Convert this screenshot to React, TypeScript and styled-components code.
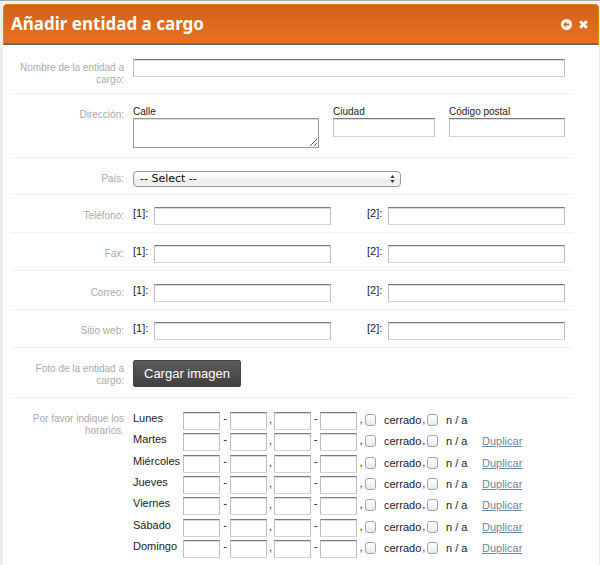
import React from "react";
import styled, { createGlobalStyle, css } from "styled-components";

const GlobalStyle = createGlobalStyle`
  * { box-sizing: border-box; }
  body {
    margin: 0;
    background: #fff;
    color: #222;
    font-family: "Liberation Sans", Arial, sans-serif;
    font-size: 11px;
  }
`;

const Frame = styled.div`
  min-height: 100vh;
  border: solid #eee;
  border-width: 0 1px 0 3px;
`;

const TopEdge = styled.div`
  height: 4px;
  margin: 0 -1px 0 -3px;
  background: #f2f2f2;
  border-top: 1px solid #a8a8a8;
`;

const Header = styled.header`
  display: flex;
  align-items: center;
  justify-content: space-between;
  height: 41px;
  padding: 0 10px 0 7px;
  border: 1px solid #e08212;
  border-bottom: 2px solid #706862;
  border-radius: 4px 4px 0 0;
  background: linear-gradient(#d0621b, #ea7020);
`;

const Title = styled.h1`
  margin: 0;
  color: #fff;
  font: 700 17px/24px "Noto Sans", "Open Sans", sans-serif;
`;

const HeaderActions = styled.div`
  display: flex;
  align-items: center;
  gap: 7px;
`;

const IconButton = styled.button`
  display: flex;
  padding: 0;
  border: 0;
  background: none;
  cursor: pointer;
`;

const Form = styled.form`
  margin: 0 27px 0 9px;
`;

const Row = styled.section<{ $height: number; $top: number; $last?: boolean }>`
  display: grid;
  grid-template-columns: 112px minmax(0, 1fr);
  align-items: start;
  column-gap: 9px;
  min-height: ${(p) => p.$height}px;
  padding: ${(p) => p.$top}px 7px 0 0;
  border-bottom: ${(p) => (p.$last ? "0" : "1px solid #efefef")};
`;

const RowLabel = styled.label<{ $drop?: number }>`
  padding-top: ${(p) => p.$drop ?? 3}px;
  color: #aaa;
  font-size: 10px;
  line-height: 12px;
  text-align: right;
`;

const inset = css`
  width: 100%;
  min-width: 0;
  margin: 0;
  padding: 0 3px;
  border: 1px solid #bdbdbd;
  border-top-color: #7c7c7c;
  border-bottom-color: #d4d4d4;
  border-radius: 0;
  background: #fff;
  box-shadow: inset 0 1px 0 #dcdcdc;
  font: inherit;
  outline: 0;
`;

const TextInput = styled.input`
  ${inset}
  display: block;
  height: 18px;
`;

const Address = styled.div`
  display: grid;
  grid-template-columns: 186fr 102fr 116fr;
  column-gap: 14px;
  align-items: start;
`;

const AddressField = styled.label`
  display: block;
  font-size: 10px;
  line-height: 12px;
`;

const AddressInput = styled(TextInput)`
  height: 19px;
`;

const StreetArea = styled.textarea`
  ${inset}
  display: block;
  height: 30px;
  border-color: #999;
  resize: both;
`;

const SelectBox = styled.div`
  position: relative;
  width: 62%;
`;

const CountrySelect = styled.select`
  display: block;
  width: 100%;
  height: 16px;
  padding: 0 6px;
  border: 1px solid #989898;
  border-radius: 4px;
  appearance: none;
  background: linear-gradient(#fff 0%, #f6f6f6 48%, #ebebeb 52%, #f3f3f3 100%);
  color: #111;
  font: 11px/14px "DejaVu Sans", sans-serif;
`;

const SelectArrows = styled.svg`
  position: absolute;
  top: 4px;
  right: 6px;
  pointer-events: none;
`;

const Pair = styled.div`
  display: grid;
  grid-template-columns: 1fr 1fr;
  column-gap: 36px;
`;

const Numbered = styled.label`
  display: grid;
  grid-template-columns: 21px minmax(0, 1fr);
  line-height: 12px;
`;

const UploadButton = styled.button`
  justify-self: start;
  height: 27px;
  padding: 0 10px;
  border: 1px solid #444;
  border-radius: 2px;
  background: linear-gradient(#5c5c5c, #404040);
  color: #fff;
  font: 13px/24px "Liberation Sans", Arial, sans-serif;
`;

const Schedule = styled.div`
  display: flex;
  flex-direction: column;
  justify-content: space-between;
  min-height: 146px;
`;

const DayRow = styled.div`
  display: grid;
  grid-template-columns: 50px 37px 10px 37px 7px 37px 9px 37px 8px 62px 55px auto;
  justify-content: start;
  align-items: start;
  height: 18px;
  line-height: 12px;
`;

const Day = styled.span``;

const Dash = styled.span`
  text-align: center;
`;

const Comma = styled.span`
  line-height: 14px;
  text-align: center;
`;

const CheckLabel = styled.label`
  display: grid;
  grid-template-columns: 11px 8px auto 1fr;
  align-items: start;
  line-height: 16px;
`;

const CheckText = styled.span`
  display: flex;
  gap: 1px;
  grid-column: 3;
  white-space: nowrap;
`;

const Check = styled.input`
  width: 11px;
  height: 12px;
  margin: 2px 0 0;
  border: 1px solid #a4a4a4;
  border-radius: 3px;
  appearance: none;
  background: linear-gradient(#fff, #e9e9e9);
  &:checked { background: #7b93ab; }
`;

const Duplicate = styled.a`
  color: #6c87a3;
  line-height: 16px;
  text-decoration: underline;
`;

const contacts = [
  { id: "telefono", label: "Teléfono:", height: 38, top: 12 },
  { id: "fax", label: "Fax:", height: 38, top: 12 },
  { id: "correo", label: "Correo:", height: 39, top: 13 },
  { id: "web", label: "Sitio web:", height: 38, top: 12 },
];

const days = ["Lunes", "Martes", "Miércoles", "Jueves", "Viernes", "Sábado", "Domingo"];

function TimeInput({ day, name }: { day: string; name: string }) {
  return <TextInput aria-label={`${day}, ${name}`} />;
}

function ScheduleRow({ day, copyable }: { day: string; copyable: boolean }) {
  return (
    <DayRow>
      <Day>{day}</Day>
      <TimeInput day={day} name="apertura 1" />
      <Dash>-</Dash>
      <TimeInput day={day} name="cierre 1" />
      <Comma>,</Comma>
      <TimeInput day={day} name="apertura 2" />
      <Dash>-</Dash>
      <TimeInput day={day} name="cierre 2" />
      <Comma>,</Comma>
      <CheckLabel>
        <Check type="checkbox" />
        <CheckText>
          <span>cerrado</span>
          <Comma>,</Comma>
        </CheckText>
      </CheckLabel>
      <CheckLabel>
        <Check type="checkbox" />
        <CheckText>n / a</CheckText>
      </CheckLabel>
      {copyable && <Duplicate href="#duplicar">Duplicar</Duplicate>}
    </DayRow>
  );
}

export default function App() {
  return (
    <>
      <GlobalStyle />
      <Frame>
        <TopEdge />
        <Header>
          <Title>Añadir entidad a cargo</Title>
          <HeaderActions>
            <IconButton type="button" aria-label="Volver">
              <svg width="11" height="11" viewBox="0 0 11 11">
                <circle cx="5.5" cy="5.5" r="5.5" fill="#fff" />
                <path d="M2 5.5 5.3 2.5V4.6H8.5V6.4H5.3V8.5Z" fill="#dc691d" />
              </svg>
            </IconButton>
            <IconButton type="button" aria-label="Cerrar">
              <svg width="9" height="9" viewBox="0 0 9 9">
                <path d="M1.2 1.2 7.8 7.8M7.8 1.2 1.2 7.8" stroke="#fff" strokeWidth="2.9" />
              </svg>
            </IconButton>
          </HeaderActions>
        </Header>
        <Form>
          <Row $height={49} $top={14}>
            <RowLabel htmlFor="nombre">Nombre de la entidad a cargo:</RowLabel>
            <TextInput id="nombre" />
          </Row>
          <Row $height={64} $top={12}>
            <RowLabel as="div" $drop={3}>Dirección:</RowLabel>
            <Address>
              <AddressField>
                Calle
                <StreetArea />
              </AddressField>
              <AddressField>
                Ciudad
                <AddressInput />
              </AddressField>
              <AddressField>
                Código postal
                <AddressInput />
              </AddressField>
            </Address>
          </Row>
          <Row $height={37} $top={13}>
            <RowLabel htmlFor="pais" $drop={2}>País:</RowLabel>
            <SelectBox>
              <CountrySelect id="pais">
                <option>-- Select --</option>
              </CountrySelect>
              <SelectArrows width="5" height="8" viewBox="0 0 5 8">
                <path d="M2.5 0 4.6 3H.4ZM2.5 8 .4 5H4.6Z" fill="#333" />
              </SelectArrows>
            </SelectBox>
          </Row>
          {contacts.map((c) => (
            <Row key={c.id} $height={c.height} $top={c.top}>
              <RowLabel as="div">{c.label}</RowLabel>
              <Pair>
                <Numbered>
                  [1]:
                  <TextInput name={`${c.id}1`} />
                </Numbered>
                <Numbered>
                  [2]:
                  <TextInput name={`${c.id}2`} />
                </Numbered>
              </Pair>
            </Row>
          ))}
          <Row $height={50} $top={12}>
            <RowLabel htmlFor="imagen">Foto de la entidad a cargo:</RowLabel>
            <UploadButton id="imagen" type="button">Cargar imagen</UploadButton>
          </Row>
          <Row $height={160} $top={14} $last>
            <RowLabel as="div" $drop={1}>Por favor indique los horarios.</RowLabel>
            <Schedule>
              {days.map((day, i) => (
                <ScheduleRow key={day} day={day} copyable={i > 0} />
              ))}
            </Schedule>
          </Row>
        </Form>
      </Frame>
    </>
  );
}
